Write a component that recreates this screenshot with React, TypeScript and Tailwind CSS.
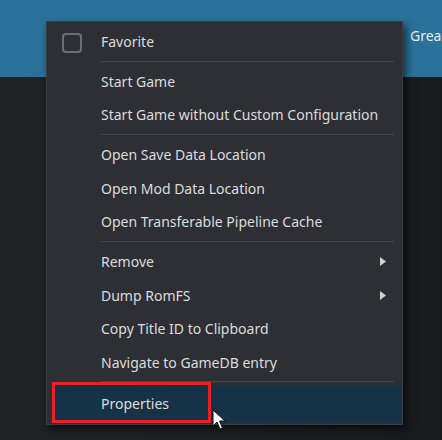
import React from 'react'

type Item = { label: string; sub?: boolean; sep?: boolean }

const items: Item[] = [
  { label: 'Start Game' },
  { label: 'Start Game without Custom Configuration', sep: true },
  { label: 'Open Save Data Location' },
  { label: 'Open Mod Data Location' },
  { label: 'Open Transferable Pipeline Cache', sep: true },
  { label: 'Remove', sub: true },
  { label: 'Dump RomFS', sub: true },
  { label: 'Copy Title ID to Clipboard' },
  { label: 'Navigate to GameDB entry' },
]

const Separator = ({ h = 'h-[6.5px]' }: { h?: string }) => (
  <div className={`${h} flex items-center pl-[54px] pr-[8px]`}>
    <div className="h-px w-full bg-[#46484e]" />
  </div>
)

const App = () => {
  return (
    <div
      className="relative w-[442px] h-[440px] overflow-hidden bg-gradient-to-r from-[#202226] via-[#1e2024] to-[#17191c] text-[14px] text-[#dcdcdc]"
      style={{ fontFamily: '"Noto Sans", "Open Sans", sans-serif' }}
    >
      {/*Barra azul de cima*/}
      <div className="h-[77px] bg-[#2a7299] pl-[410px] pt-[25px] text-[#e8eef2] whitespace-nowrap">Great</div>

      {/*Menu de contexto*/}
      <div className="absolute left-[46px] top-[21px] w-[357px] pt-[2.5px] pb-[1px] bg-[#2d2f34] border border-[#3a3c41] shadow-[3px_4px_8px_rgba(0,0,0,0.6)]">
        <div className="h-[33.5px] flex items-center">
          <div className="ml-[15px] mt-[3px] w-[20px] h-[20px] rounded-[4px] border-2 border-[#6b6e74]" />
          <span className="ml-[19px]">Favorite</span>
        </div>
        <Separator />

        {items.map((it) => (
          <React.Fragment key={it.label}>
            <div className="h-[33.5px] flex items-center pl-[54px] pr-[16px]">
              <span className="flex-1 whitespace-nowrap">{it.label}</span>
              {it.sub && (
                <svg width="6" height="9" viewBox="0 0 6 9">
                  <path d="M0 0 L6 4.5 L0 9 Z" fill="#d0d0d0" />
                </svg>
              )}
            </div>
            {it.sep && <Separator />}
          </React.Fragment>
        ))}

        <Separator h="h-[5.75px]" />
        <div className="h-[38px] ml-[5px] mr-[1px] flex items-center pl-[49px] bg-[#163246]">Properties</div>

        {/*Caixa vermelha*/}
        <div className="absolute left-[5px] top-[360px] w-[159px] h-[41px] border-[3px] border-[#e8202a]" />
      </div>

      {/*Cursor*/}
      <svg className="absolute left-[212px] top-[409px]" width="14" height="22" viewBox="0 0 14 22">
        <path d="M1 1 L1 17 L5 13 L8 20 L10.5 19 L7.5 12 L13 12 Z" fill="#ffffff" stroke="#111" strokeWidth="1" strokeLinejoin="round" />
      </svg>
    </div>
  )
}

export default App
